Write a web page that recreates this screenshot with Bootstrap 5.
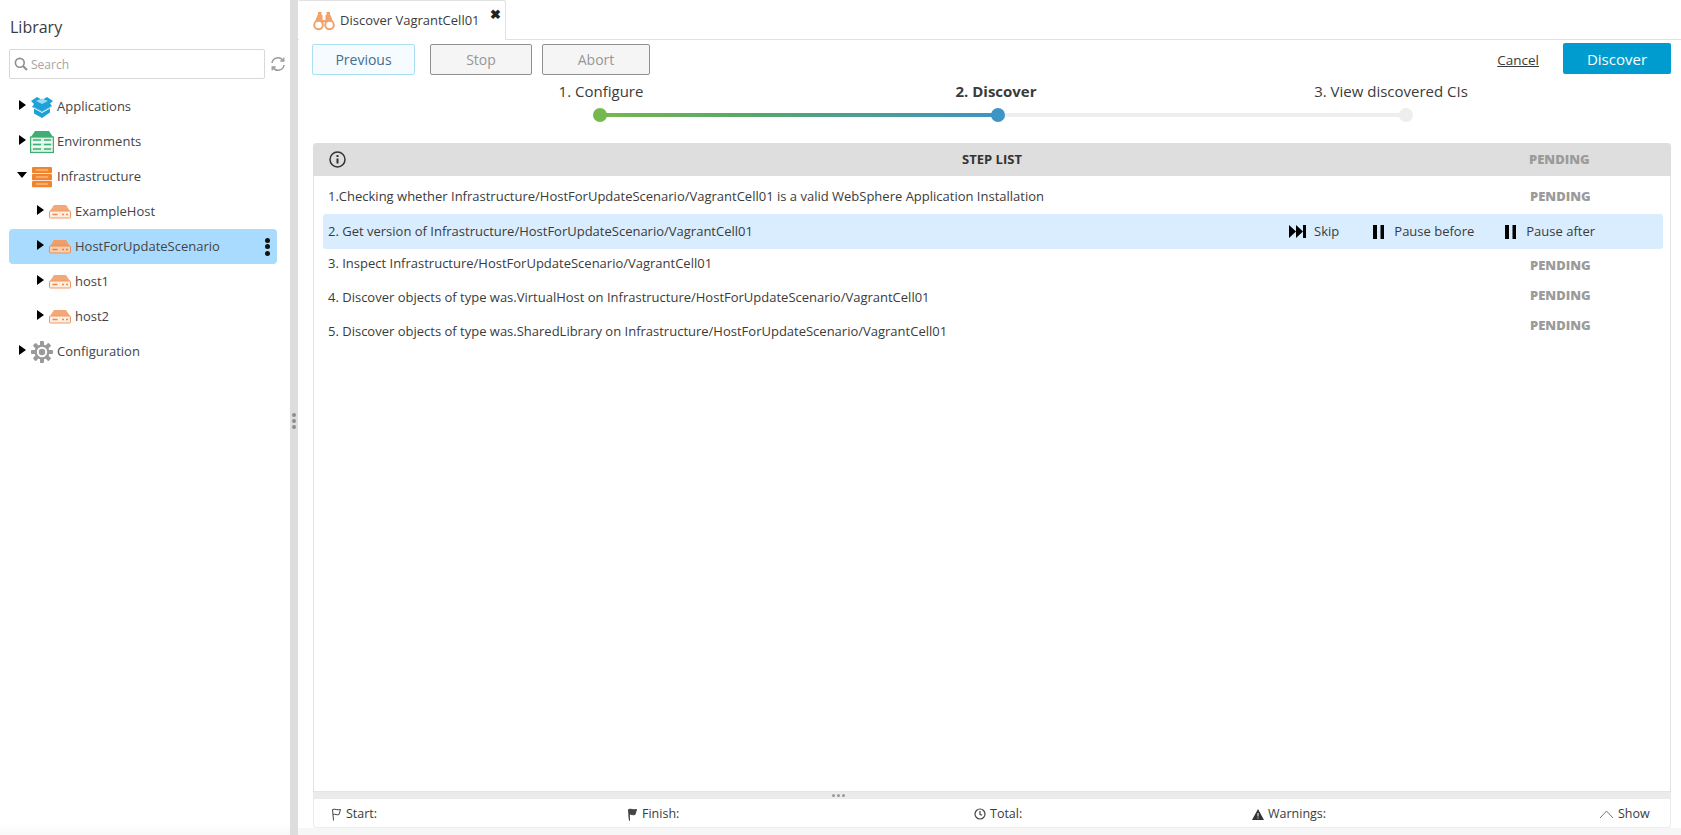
<!DOCTYPE html>
<html lang="en">
<head>
<meta charset="utf-8">
<title>Discover VagrantCell01</title>
<link href="https://cdn.jsdelivr.net/npm/bootstrap@5.3.0/dist/css/bootstrap.min.css" rel="stylesheet">
<style>
html,body{height:100%;margin:0;overflow:hidden}
body{font-family:"Open Sans",sans-serif;font-size:13px;color:#3b3b3b;background:#fff}
.app-shell{height:835px}
.lib-pane{width:290px;flex:none;padding:17px 4px 0 9px;position:relative;background:linear-gradient(#fff calc(100% - 12px),#f8f8f8)}
.lib-title{font-size:16px;line-height:20px;margin:0 0 12px 1px;font-weight:400;color:#3b3b3b}
.search-row{height:30px;margin-bottom:10px}
.search-box{width:256px;height:30px;border:1px solid #d8d8d8;border-radius:2px;padding:0 4px;color:#a5a5a5;font-size:12px;background:#fff}
.search-input{border:0;outline:0;padding:1px 0 0;margin-left:-1px;width:200px;font-size:12px;background:transparent;color:#a5a5a5}
.search-input::placeholder{color:#a5a5a5;opacity:1}
.tree-node{height:35px;border-radius:4px;width:268px;font-size:13px;color:#444}
.tree-node.lvl0{padding-left:10px}
.tree-node.lvl1{padding-left:28px}
.tree-node.picked{background:#a9dbff}
.tw{width:0;height:0;border-style:solid;border-width:5.5px 0 5.5px 7px;border-color:transparent transparent transparent #000;flex:none;margin-right:4px;margin-top:-3px}
.tw.open{border-width:6px 5.5px 0 5.5px;border-color:#000 transparent transparent transparent;margin-left:-2px;margin-right:3px}
.node-ico{flex:none;margin-right:3px}
.kebab{margin-left:auto;margin-right:7px;width:5px}
.kebab i{display:block;width:5px;height:5px;border-radius:50%;background:#111;margin:1.5px 0}
.split-bar{width:8px;flex:none;background:#ddd;position:relative;margin-right:0}
.split-dots{position:absolute;left:2px;top:413px;width:4px}
.split-dots i{display:block;width:4px;height:4px;border-radius:50%;background:#8e8e8e;margin-bottom:2px}
.work-pane{min-width:0;padding:0}
.tab-strip{height:40px;border-bottom:1px solid #e1e1e1;flex:none}
.doc-tab{width:207px;height:40px;margin-left:1px;background:#fff;border:1px solid #e1e1e1;border-bottom:0;border-left:0;border-top-right-radius:3px;padding-left:14px;font-size:13px;color:#3b3b3b;position:relative}
.tab-gap{margin-right:1px}
.tab-x{position:absolute;left:191px;top:5px;font-size:13px;font-weight:700;line-height:16px;color:#222}
.act-row{height:36px;padding:4px 10px 0 14px;flex:none}
.act-btn{height:31px;width:102px;border-radius:2px;font-size:14px;line-height:28px;padding:0;text-align:center;--bs-btn-padding-y:0;margin-right:10px}
.act-prev{width:103px;background:#f5fbff;border:1px solid #abe0f3;color:#446e92;margin-right:15px}
.act-off{background:#f5f5f5;border:1px solid #8f8f8f;color:#979797}
.act-off.wide{width:108px}
.cancel-lnk{color:#3b3b3b;text-decoration:underline;font-size:13.5px;margin-right:24px;margin-top:6px}
.go-btn{width:108px;height:31px;background:#009ccf;color:#fff;border:0;border-radius:2px;font-size:15px;line-height:30px;padding:0;margin-top:-1px}
.steps-wrap{height:67px;flex:none;position:relative}
.step-lbl{position:absolute;top:5px;font-size:15px;line-height:20px;transform:translateX(-50%);white-space:nowrap;color:#3b3b3b}
.step-track{position:absolute;top:37px;height:4px;left:302px;width:808px;background:#eee;border-radius:2px}
.step-fill{height:4px;width:398px;background:linear-gradient(90deg,#74b84e 0,#57a66c 40%,#3d95c5 100%)}
.step-dot{position:absolute;top:32px;width:14px;height:14px;border-radius:50%;transform:translateX(-50%)}
.step-panel{margin:0 10px 0 15px;border:1px solid #e4e4e4;border-top:0;border-radius:4px 4px 0 0;height:649px;flex:none;position:relative}
.panel-head{height:33px;margin:0 -1px;background:#dedede;border-radius:4px 4px 0 0;padding:0 0 0 16px;font-size:13px;font-weight:700;position:relative;color:#333}
.head-title{position:absolute;left:0;right:0;text-align:center}
.stat-lbl{font-size:13px;font-weight:800;color:#9b9b9b;position:absolute;left:1216px;white-space:nowrap}
.step-list{position:relative;height:100%}
.step-row{position:absolute;left:14px;white-space:nowrap;font-size:13px;line-height:18px;color:#3b3b3b}
.step-band{position:absolute;left:9px;width:1340px;top:38px;height:35px;background:#d9edff;border-radius:3px;font-size:13px;color:#3b3b3b;padding-left:5px}
.band-acts{margin-left:auto}
.band-act{gap:10px;margin-right:0}
.band-skip{gap:8px}
.band-gap1{margin-right:34px}
.band-gap2{margin-right:31px}
.band-end{margin-right:68px}
.foot-grip{height:7px;background:#ebebeb;margin:0 10px 0 15px;flex:none;position:relative}
.grip-dots{position:absolute;left:519px;top:2px;display:flex;gap:2px}
.grip-dots i{display:block;width:3px;height:3px;border-radius:50%;background:#9a9a9a}
.foot-bar{height:29px;margin:0 10px 0 15px;border:1px solid #ececec;border-top:0;border-radius:0 0 3px 3px;flex:none;position:relative;font-size:12.5px;color:#3b3b3b;background:#fff}
.foot-cell{position:absolute;top:6px;line-height:18px;gap:4px;white-space:nowrap}
.foot-fade{height:7px;background:#f6f6f6;flex:none}
</style>
</head>
<body>
<div class="app-shell d-flex">
  <aside class="lib-pane">
    <h1 class="lib-title">Library</h1>
    <div class="search-row d-flex align-items-center">
      <div class="search-box d-flex align-items-center gap-1">
        <svg width="14" height="14" viewBox="0 0 14 14" fill="none" stroke="#8e8e8e" stroke-width="1.6"><circle cx="5.800" cy="5.800" r="4.400"/><path d="M9 9l4 4" stroke-width="2"/></svg>
        <input class="search-input" placeholder="Search" aria-label="Search">
      </div>
      <svg class="ms-auto" width="16" height="16" viewBox="0 0 16 16" fill="none" stroke="#9a9a9a" stroke-width="1.500"><path d="M2 7a6 6 0 0 1 11-2.500"/><path d="M14 9a6 6 0 0 1-11 2.500"/><path d="M13.800 1.500v3.500h-3.500" stroke-width="1.300"/><path d="M2.200 14.500v-3.500h3.500" stroke-width="1.300"/></svg>
    </div>
    <div class="tree-node lvl0 d-flex align-items-center"><span class="tw"></span>
      <svg class="node-ico" width="24" height="24" viewBox="0 0 24 24"><path d="M1 6l6-4 5 3 5-3 6 4-3 2.500 2 2.500-2 1v5.500L12 23l-8-4.500V13l-2-1 2-3z" fill="#1ea1d6"/><path d="M6 6l6-2.500L18 6l-6 3z" fill="#9adcf5"/><path d="M4 13l8 4.500 8-4.500" fill="none" stroke="#fff" stroke-width="1"/><path d="M2 11.500l10 5 10-5" fill="none" stroke="#8ad3f0" stroke-width=".6"/></svg>
      <span>Applications</span></div>
    <div class="tree-node lvl0 d-flex align-items-center"><span class="tw"></span>
      <svg class="node-ico" width="24" height="24" viewBox="0 0 24 24"><path d="M5 1h14l4 6H1z" fill="#3fae74"/><rect x=".6" y="7" width="22.800" height="15.500" fill="#d8f1e2" stroke="#3fae74" stroke-width="1.200"/><path d="M3 10h8M14 10h7M3 14.500h8M14 14.500h7M3 19h8M14 19h7" stroke="#3fae74" stroke-width="1.500"/><path d="M1 12.200h22M1 16.800h22" stroke="#fff" stroke-width="1"/></svg>
      <span>Environments</span></div>
    <div class="tree-node lvl0 d-flex align-items-center"><span class="tw open"></span>
      <svg class="node-ico" width="24" height="24" viewBox="0 0 24 24"><rect x="2" y="2" width="20" height="6.200" rx="1" fill="#f1842c"/><rect x="2" y="9" width="20" height="6.200" rx="1" fill="#f1842c"/><rect x="2" y="16" width="20" height="6.200" rx="1" fill="#f1842c"/><path d="M6 5h12M6 12h12M6 19h12" stroke="#fbd3ae" stroke-width="1"/></svg>
      <span>Infrastructure</span></div>
    <div class="tree-node lvl1 d-flex align-items-center"><span class="tw"></span>
      <svg class="node-ico" width="24" height="24" viewBox="0 0 24 24"><path d="M6 5h12l4 6H2z" fill="#f3a878"/><rect x="1.500" y="11" width="21" height="7" rx="1" fill="#fdeee2" stroke="#ef9a62" stroke-width="1"/><path d="M4.500 14.500h5M14 14.500h2M18 14.500h2" stroke="#ef8a48" stroke-width="1.300"/></svg>
      <span>ExampleHost</span></div>
    <div class="tree-node lvl1 picked d-flex align-items-center"><span class="tw"></span>
      <svg class="node-ico" width="24" height="24" viewBox="0 0 24 24"><path d="M6 5h12l4 6H2z" fill="#ee9c6a"/><rect x="1.500" y="11" width="21" height="7" rx="1" fill="#f7cfae" stroke="#e99058" stroke-width="1"/><path d="M4.500 14.500h5M14 14.500h2M18 14.500h2" stroke="#e67f3d" stroke-width="1.300"/></svg>
      <span>HostForUpdateScenario</span>
      <span class="kebab"><i></i><i></i><i></i></span></div>
    <div class="tree-node lvl1 d-flex align-items-center"><span class="tw"></span>
      <svg class="node-ico" width="24" height="24" viewBox="0 0 24 24"><path d="M6 5h12l4 6H2z" fill="#f3a878"/><rect x="1.500" y="11" width="21" height="7" rx="1" fill="#fdeee2" stroke="#ef9a62" stroke-width="1"/><path d="M4.500 14.500h5M14 14.500h2M18 14.500h2" stroke="#ef8a48" stroke-width="1.300"/></svg>
      <span>host1</span></div>
    <div class="tree-node lvl1 d-flex align-items-center"><span class="tw"></span>
      <svg class="node-ico" width="24" height="24" viewBox="0 0 24 24"><path d="M6 5h12l4 6H2z" fill="#f3a878"/><rect x="1.500" y="11" width="21" height="7" rx="1" fill="#fdeee2" stroke="#ef9a62" stroke-width="1"/><path d="M4.500 14.500h5M14 14.500h2M18 14.500h2" stroke="#ef8a48" stroke-width="1.300"/></svg>
      <span>host2</span></div>
    <div class="tree-node lvl0 d-flex align-items-center"><span class="tw"></span>
      <svg class="node-ico" width="24" height="24" viewBox="0 0 24 24"><g fill="#9a9a9a"><circle cx="12" cy="12" r="7.500"/><rect x="10" y="1" width="4" height="22" rx=".8"/><rect x="1" y="10" width="22" height="4" rx=".8"/><rect x="10" y="1" width="4" height="22" rx=".8" transform="rotate(45 12 12)"/><rect x="1" y="10" width="22" height="4" rx=".8" transform="rotate(45 12 12)"/></g><circle cx="12" cy="12" r="5.200" fill="#fff"/><circle cx="12" cy="12" r="3.200" fill="#9a9a9a"/></svg>
      <span>Configuration</span></div>
  </aside>
  <div class="split-bar"><span class="split-dots"><i></i><i></i><i></i></span></div>
  <main class="work-pane flex-grow-1 d-flex flex-column">
    <div class="tab-strip">
      <div class="doc-tab d-flex align-items-center gap-1">
        <svg class="tab-gap" width="22" height="20" viewBox="0 0 22 20"><g fill="#f2a36c"><path d="M5 1h3.500v6H5zM13.500 1H17v6h-3.500z"/><path d="M4.500 4h5v5h3V4h5l3.500 9h-8l-1-2h-1l-1 2H1z"/></g><circle cx="5.500" cy="14" r="4.300" fill="#fff" stroke="#f2a36c" stroke-width="2"/><circle cx="16.500" cy="14" r="4.300" fill="#fff" stroke="#f2a36c" stroke-width="2"/></svg>
        <span>Discover VagrantCell01</span>
        <span class="tab-x">✖</span>
      </div>
    </div>
    <div class="act-row d-flex align-items-start">
      <button class="btn act-btn act-prev">Previous</button>
      <button class="btn act-btn act-off">Stop</button>
      <button class="btn act-btn act-off wide">Abort</button>
      <a class="cancel-lnk ms-auto" href="#">Cancel</a>
      <button class="btn go-btn">Discover</button>
    </div>
    <div class="steps-wrap">
      <span class="step-lbl" style="left:303px">1. Configure</span>
      <span class="step-lbl fw-bold" style="left:698px">2. Discover</span>
      <span class="step-lbl" style="left:1093px">3. View discovered CIs</span>
      <div class="step-track"><div class="step-fill"></div></div>
      <span class="step-dot" style="left:302px;background:#74b84e"></span>
      <span class="step-dot" style="left:700px;background:#3d95c5"></span>
      <span class="step-dot" style="left:1108px;background:#eee"></span>
    </div>
    <section class="step-panel">
      <div class="panel-head d-flex align-items-center">
        <svg width="17" height="17" viewBox="0 0 17 17" fill="none" stroke="#333" stroke-width="1.500"><circle cx="8.500" cy="8.500" r="7.500"/><path d="M8.500 7.500v5" stroke-width="2"/><path d="M8.500 4v2" stroke-width="2"/></svg>
        <span class="head-title">STEP LIST</span>
        <span class="stat-lbl">PENDING</span>
      </div>
      <div class="step-list">
        <div class="step-row" style="top:11px">1.Checking whether Infrastructure/HostForUpdateScenario/VagrantCell01 is a valid WebSphere Application Installation</div>
        <span class="stat-lbl" style="top:11px">PENDING</span>
        <div class="step-band d-flex align-items-center">
          <span>2. Get version of Infrastructure/HostForUpdateScenario/VagrantCell01</span>
          <div class="band-acts d-flex align-items-center">
            <span class="band-act band-skip band-gap1 d-flex align-items-center"><svg width="17" height="13" viewBox="0 0 17 13"><path d="M0 0l7 6.500L0 13zM7 0l7 6.500L7 13z" fill="#000"/><rect x="14" y="0" width="3" height="13" fill="#000"/></svg>Skip</span>
            <span class="band-act band-gap2 d-flex align-items-center"><svg width="11" height="14" viewBox="0 0 11 14"><rect width="4" height="14" fill="#000"/><rect x="7.500" width="3.500" height="14" fill="#000"/></svg>Pause before</span>
            <span class="band-act band-end d-flex align-items-center"><svg width="11" height="14" viewBox="0 0 11 14"><rect width="4" height="14" fill="#000"/><rect x="7.500" width="3.500" height="14" fill="#000"/></svg>Pause after</span>
          </div>
        </div>
        <div class="step-row" style="top:78px">3. Inspect Infrastructure/HostForUpdateScenario/VagrantCell01</div>
        <span class="stat-lbl" style="top:80px">PENDING</span>
        <div class="step-row" style="top:112px">4. Discover objects of type was.VirtualHost on Infrastructure/HostForUpdateScenario/VagrantCell01</div>
        <span class="stat-lbl" style="top:110px">PENDING</span>
        <div class="step-row" style="top:146px">5. Discover objects of type was.SharedLibrary on Infrastructure/HostForUpdateScenario/VagrantCell01</div>
        <span class="stat-lbl" style="top:140px">PENDING</span>
      </div>
    </section>
    <div class="foot-grip"><span class="grip-dots"><i></i><i></i><i></i></span></div>
    <div class="foot-bar">
      <span class="foot-cell d-flex align-items-center" style="left:17px"><svg width="11" height="13" viewBox="0 0 11 13" fill="none" stroke="#444"><path d="M2.500 12.500L1.500 1.500C4 .5 6 2.500 9.500 1.500L8 6.500C6 7.500 4 5.500 2 6.500"/></svg>Start:</span>
      <span class="foot-cell d-flex align-items-center" style="left:313px"><svg width="11" height="13" viewBox="0 0 11 13" fill="#444" stroke="#444"><path d="M2.500 12.500L1.500 1.500C4 .5 6 2.500 9.500 1.500L8 6.500C6 7.500 4 5.500 2 6.500z"/></svg>Finish:</span>
      <span class="foot-cell d-flex align-items-center" style="left:660px"><svg width="12" height="12" viewBox="0 0 12 12" fill="none" stroke="#444" stroke-width="1.200"><circle cx="6" cy="6" r="5"/><path d="M6 3v3.300l2 1"/></svg>Total:</span>
      <span class="foot-cell d-flex align-items-center" style="left:938px"><svg width="12" height="11" viewBox="0 0 12 11"><path d="M6 0l6 11H0z" fill="#333"/><path d="M6 4v3.500M6 8.500v1" stroke="#fff"/></svg>Warnings:</span>
      <span class="foot-cell d-flex align-items-center" style="left:1285px"><svg width="15" height="9" viewBox="0 0 15 9" fill="none" stroke="#777"><path d="M1 8l6.500-7L14 8"/></svg>Show</span>
    </div>
    <div class="foot-fade"></div>
  </main>
</div>
</body>
</html>
